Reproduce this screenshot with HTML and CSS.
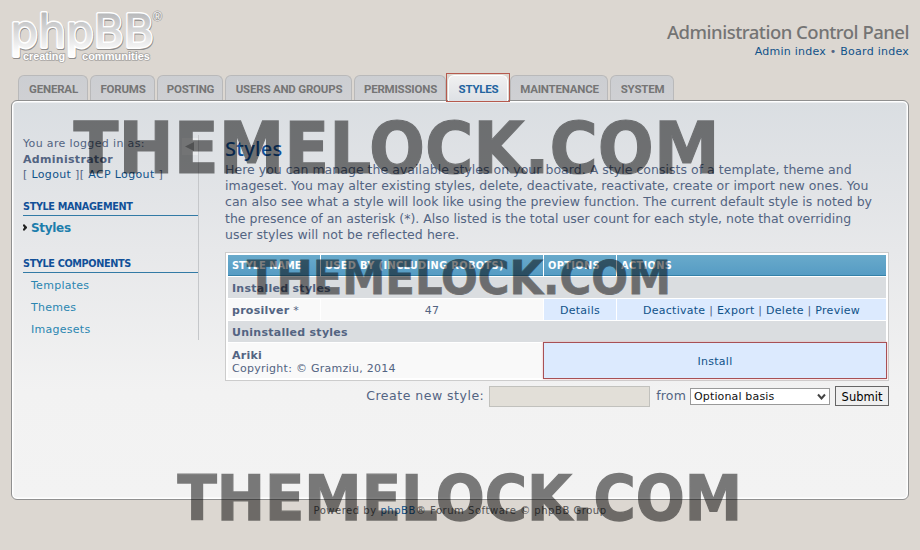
FILE: index.html
```html
<!DOCTYPE html>
<html lang="en">
<head>
<meta charset="utf-8">
<title>Administration Control Panel</title>
<link rel="stylesheet" href="styles.css">
</head>
<body>
<header class="header">
  <svg class="logo" width="160" height="60" viewBox="0 0 160 60">
    <defs><linearGradient id="g" gradientUnits="userSpaceOnUse" x1="0" y1="6" x2="0" y2="44"><stop offset="0" stop-color="#b9babc"/><stop offset="1" stop-color="#fcfcfc"/></linearGradient></defs>
    <g class="logo-word">
      <text class="logo-shade" x="1.500" y="39.500" textLength="144" lengthAdjust="spacingAndGlyphs">phpBB</text>
      <text class="logo-edge" x="1" y="38.500" textLength="144" lengthAdjust="spacingAndGlyphs">phpBB</text>
      <text class="logo-face" x="1" y="38.500" textLength="144" lengthAdjust="spacingAndGlyphs">phpBB</text>
    </g>
    <g class="logo-tag">
      <text x="14" y="52" textLength="42" lengthAdjust="spacingAndGlyphs">creating</text>
      <text x="73" y="52" textLength="68" lengthAdjust="spacingAndGlyphs">communities</text>
      <text class="logo-reg" x="144" y="13">®</text>
    </g>
  </svg>
  <div class="heading">
    <h1>Administration Control Panel</h1>
    <p><a>Admin index</a> • <a>Board index</a></p>
  </div>
</header>
<nav class="tabs">
  <a class="tab t1"><span>GENERAL</span></a>
  <a class="tab t2"><span>FORUMS</span></a>
  <a class="tab t3"><span>POSTING</span></a>
  <a class="tab t4"><span>USERS AND GROUPS</span></a>
  <a class="tab t5"><span>PERMISSIONS</span></a>
  <div class="active-frame"><a class="tab active"><span>STYLES</span></a></div>
  <a class="tab t7"><span>MAINTENANCE</span></a>
  <a class="tab t8"><span>SYSTEM</span></a>
</nav>
<div class="panel">
  <aside class="side">
    <div class="toggle"><svg width="16" height="17" viewBox="0 0 16 17"><path d="M3 8.500L12 4v9z" fill="#a4a6a8"/></svg></div>
    <p class="login"><span>You are logged in as:</span><br><strong>Administrator</strong><br>[ <a>Logout</a> ][ <a>ACP Logout</a> ]</p>
    <h3>STYLE MANAGEMENT</h3>
    <a class="item current"><svg width="4" height="7" viewBox="0 0 4 7"><path d="M0 .5h2v1h1v1h1v2H3v1H2v1H0v-2h1v-2H0z" fill="#222"/></svg>Styles</a>
    <h3 class="second">STYLE COMPONENTS</h3>
    <a class="item">Templates</a>
    <a class="item">Themes</a>
    <a class="item">Imagesets</a>
  </aside>
  <main class="main">
    <h2>Styles</h2>
    <p class="intro"><span>Here you can manage the available styles on your board. A style consists of a template, theme and</span><span>imageset. You may alter existing styles, delete, deactivate, reactivate, create or import new ones. You</span><span>can also see what a style will look like using the preview function. The current default style is noted by</span><span class="l4">the presence of an asterisk (*). Also listed is the total user count for each style, note that overriding</span><span class="l5">user styles will not be reflected here.</span></p>
    <div class="table">
      <div class="th">STYLE NAME</div><div class="th">USED BY (INCLUDING ROBOTS)</div><div class="th">OPTIONS</div><div class="th">ACTIONS</div>
      <div class="cat">Installed styles</div>
      <div class="td"><span><strong>prosilver</strong> *</span></div><div class="td mid">47</div><div class="td mid blue"><a>Details</a></div><div class="td mid blue acts"><span><a>Deactivate</a> | <a>Export</a> | <a>Delete</a> | <a>Preview</a></span></div>
      <div class="cat">Uninstalled styles</div>
      <div class="td wide"><strong>Ariki</strong><br><span>Copyright: © Gramziu, 2014</span></div><div class="td mid blue install"><a>Install</a></div>
    </div>
    <form class="create">
      <label>Create new style:</label><span class="field"></span><span class="from">from</span>
      <span class="select">Optional basis<svg width="9" height="8" viewBox="0 0 9 8"><path d="M1 1.500L4.500 5.500 8 1.500" fill="none" stroke="#444" stroke-width="2"/></svg></span>
      <button type="button">Submit</button>
    </form>
  </main>
</div>
<footer class="footer">Powered by <a>phpBB</a>® Forum Software © phpBB Group</footer>
<svg class="marks" width="920" height="550" viewBox="0 0 920 550">
  <text x="73.500" y="172.500" font-size="71.500" stroke-width="1.200" textLength="646" lengthAdjust="spacingAndGlyphs">THEMELOCK.COM</text>
  <text x="247" y="293.800" font-size="47" stroke-width=".8" textLength="424" lengthAdjust="spacingAndGlyphs">THEMELOCK.COM</text>
  <text x="177.500" y="519.500" font-size="63" stroke-width="1.400" textLength="564.500" lengthAdjust="spacingAndGlyphs">THEMELOCK.COM</text>
</svg>
</body>
</html>
```
FILE: styles.css
```css
* { box-sizing: border-box; }
body { margin: 0; width: 920px; height: 550px; overflow: hidden; position: relative; background: #dcd7d1; color: #536482; font: 11px/15px "DejaVu Sans", sans-serif; letter-spacing: .27px; }
h1, h2, h3, p { margin: 0; }
a { color: #105289; }
.header { display: flex; justify-content: space-between; height: 75px; padding: 8px 11px 0 9px; }
.logo { overflow: visible; letter-spacing: 0; }
.logo-word { font: 44px "DejaVu Sans", sans-serif; stroke-linejoin: round; }
.logo-shade { fill: #8f8d8c; stroke: #8f8d8c; stroke-width: 4px; }
.logo-edge { fill: #fff; stroke: #fff; stroke-width: 3.8px; }
.logo-face { fill: url(#g); stroke: url(#g); stroke-width: .8px; }
.logo-tag { font: bold 10.5px "Liberation Sans", sans-serif; fill: #fff; stroke: #a5a3a1; stroke-width: 1.5px; paint-order: stroke; }
.logo-tag .logo-reg { font-size: 12px; font-weight: normal; }
.heading { text-align: right; padding-top: 12px; }
.heading h1 { font: 500 18.5px/23px "Noto Sans", sans-serif; color: #747474; white-space: nowrap; letter-spacing: -.5px; }
.heading p { padding-top: 1px; letter-spacing: .25px; }
.tabs { display: flex; height: 25px; padding-left: 18px; gap: 2px; }
.tab { display: flex; align-items: center; justify-content: center; height: 25px; padding: 3px 0 0 1px; border: 1px solid #b9b9ba; border-bottom: 0; border-radius: 6px 6px 0 0; background: linear-gradient(#ccced2, #cfd0d3); color: #757575; font: bold 11.5px/15px Roboto, "Liberation Sans", sans-serif; letter-spacing: -.2px; white-space: nowrap; }
.t1 { width: 70px; } .t2 { width: 65px; } .t3 { width: 66px; } .t4 { width: 127px; } .t5 { width: 92px; } .t7 { width: 98px; margin-left: -2px; } .t8 { width: 64px; }
.active-frame { width: 64px; height: 29px; margin: -2px 0 0 -2px; padding: 1px 1px 0; border: 1px solid #b65a4e; z-index: 1; }
.active { height: 26px; padding-top: 2px; border-color: #fff; background: linear-gradient(#f0f0f1, #dee1e5); color: #23649f; }
.panel { display: flex; width: 898px; height: 400px; margin-left: 11px; padding-top: 34px; border: 1px solid #909090; border-radius: 6px; box-shadow: inset 0 0 0 1.5px #fff; background: linear-gradient(#dadee2 0, #e7e8ea 150px, #f2f2f2 290px, #f3f3f3); }
.side { position: relative; width: 176px; height: 205px; margin-left: 11px; border-right: 1px solid #c5c7ca; }
.toggle { position: absolute; right: 0; top: 3px; width: 16px; height: 17px; background: #e9ebed; }
.toggle svg { display: block; }
.login { height: 48px; padding-top: 1px; line-height: 15.5px; white-space: nowrap; letter-spacing: .35px; }
.login strong { letter-spacing: .3px; }
.side h3 { height: 16px; margin-top: 17px; padding-top: 1px; border-bottom: 1px solid #327aa5; color: #115098; font: bold 9.7px/12px "DejaVu Sans", sans-serif; letter-spacing: -.35px; }
.item { display: flex; align-items: center; height: 22px; padding-left: 8px; color: #2a86b1; }
.current { position: relative; font-size: 12px; font-weight: bold; color: #1c7dac; padding-top: 2px; letter-spacing: -.3px; }
.current svg { position: absolute; left: 0; top: 8px; }
.side h3.second { margin-top: 19px; margin-bottom: 1px; }
.main { width: 664px; margin-left: 26px; }
.main h2 { height: 26px; font: 500 20px/27px "Noto Sans", sans-serif; color: #115098; }
.intro { height: 91px; padding-top: .5px; font-size: 12.500px; line-height: 16.400px; white-space: nowrap; letter-spacing: .03px; }
.intro span { display: block; }
.intro .l4 { letter-spacing: 0; }
.intro .l5 { letter-spacing: .06px; }
.table { display: grid; grid-template-columns: 92px 222px 72px 269px; grid-template-rows: 21px 21px 21px 21px 35px; gap: 1px; height: 129px; padding: 2px; border: 1px solid #ccc; background: #fff; }
.th { padding-left: 4px; border-bottom: 1px solid #3481a8; background: linear-gradient(#69aacb, #569cc4); color: #fff; font: bold 9.800px/21px "DejaVu Sans", sans-serif; white-space: nowrap; letter-spacing: .36px; }
.th:first-child { letter-spacing: 0; }
.cat { grid-column: 1 / -1; padding-left: 4px; background: #dadde0; font-weight: bold; line-height: 23px; }
.td { padding: 4px 4px 2px; background: #f9f9f9; white-space: nowrap; }
.wide { grid-column: 1 / 3; padding-top: 6px; line-height: 13px; }
.mid { display: flex; align-items: center; justify-content: center; }
.blue { background: #dceafe; }
.install { grid-column: 3 / 5; margin: -1px; border: 1px solid #a85055; box-shadow: 0 0 2px #edb5b5; }
.create { display: flex; align-items: flex-start; justify-content: flex-end; margin-top: 5px; height: 20px; font-size: 12.500px; line-height: 20px; }
.create label { white-space: nowrap; margin-right: 5px; letter-spacing: .5px; }
.field { width: 161px; height: 21px; border: 1px solid #c1c1bd; background: #e2dfd8; }
.from { margin: 0 4px 0 6px; letter-spacing: .15px; }
.select { display: flex; align-items: center; justify-content: space-between; width: 140px; height: 17px; margin-top: 2px; padding: 0 3px; border: 1px solid #999; background: #fff; color: #111; font-size: 11px; letter-spacing: .15px; }
button { width: 54px; height: 20px; margin: 0 0 0 5px; padding: 0; border: 1px solid #666; background: #efefef; color: #000; font: 11.500px/20px "DejaVu Sans", sans-serif; }
.footer { padding-top: 4px; text-align: center; font-size: 10px; line-height: 14px; color: #555; letter-spacing: .53px; }
.marks { position: absolute; left: 0; top: 0; pointer-events: none; z-index: 2; opacity: .5; fill: #000; stroke: #000; font-family: "DejaVu Sans", sans-serif; font-weight: bold; letter-spacing: 0; }
```
